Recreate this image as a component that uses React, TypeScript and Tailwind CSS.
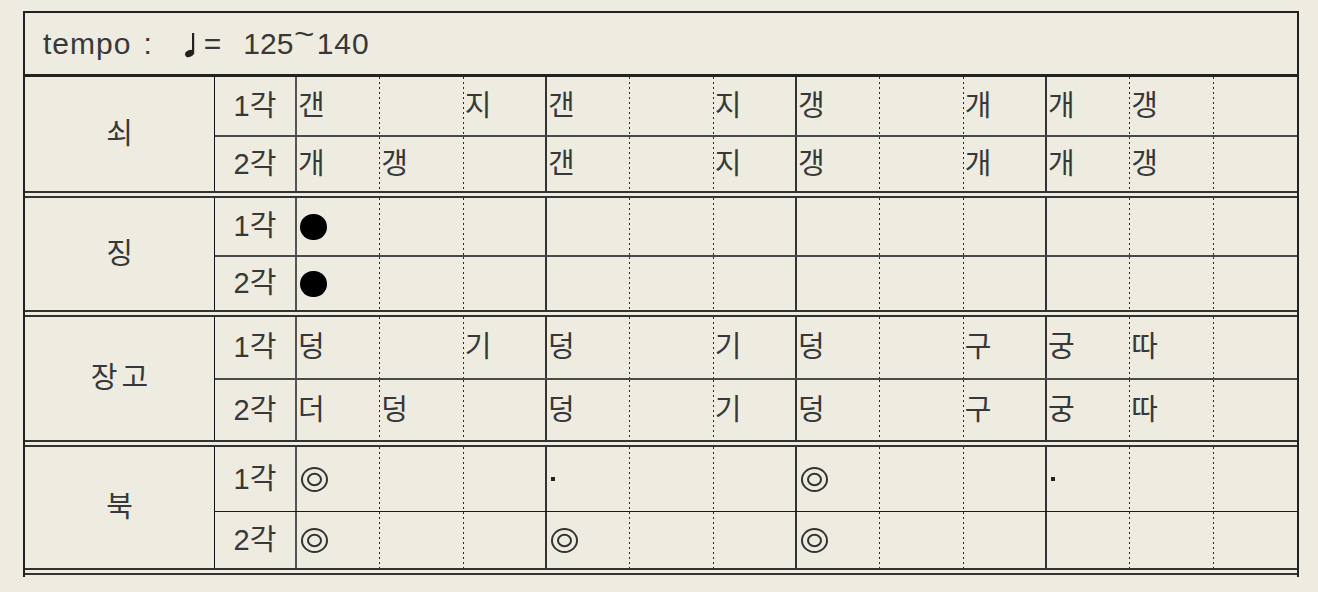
import React from "react";

type Group = {
  name: string;
  nameClass?: string;
  rowH: [string, string];
  sep: string;
  rows: [string[], string[]];
};

const groups: Group[] = [
  {
    name: "쇠",
    rowH: ["h-[60px]", "h-[54px]"],
    sep: "border-b-2 border-[#4a4a4a]",
    rows: [
      ["갠", "", "지", "갠", "", "지", "갱", "", "개", "개", "갱", ""],
      ["개", "갱", "", "갠", "", "지", "갱", "", "개", "개", "갱", ""],
    ],
  },
  {
    name: "징",
    rowH: ["h-[59px]", "h-[53px]"],
    sep: "border-b-2 border-[#4a4a4a]",
    rows: [
      ["●", "", "", "", "", "", "", "", "", "", "", ""],
      ["●", "", "", "", "", "", "", "", "", "", "", ""],
    ],
  },
  {
    name: "장고",
    nameClass: "tracking-[4px] pl-[4px]",
    rowH: ["h-[63px]", "h-[60px]"],
    sep: "border-b-2 border-[#4a4a4a]",
    rows: [
      ["덩", "", "기", "덩", "", "기", "덩", "", "구", "궁", "따", ""],
      ["더", "덩", "", "덩", "", "기", "덩", "", "구", "궁", "따", ""],
    ],
  },
  {
    name: "북",
    rowH: ["h-[65px]", "h-[56px]"],
    sep: "border-b border-[#1a1a1a]",
    rows: [
      ["◎", "", "", "·", "", "", "◎", "", "", "·", "", ""],
      ["◎", "", "", "◎", "", "", "◎", "", "", "", "", ""],
    ],
  },
];

function Mark({ v }: { v: string }) {
  if (v === "●") return <div className="ml-[3px] w-[27px] h-[26px] rounded-full bg-black" />;
  if (v === "·") return <div className="ml-[4px] w-[4px] h-[4px] bg-[#222]" />;
  if (v === "◎")
    return (
      <svg width="31" height="27" viewBox="0 0 31 27" className="ml-[3px]">
        <ellipse cx="14.5" cy="13.5" rx="12.5" ry="11.5" fill="none" stroke="#333" strokeWidth="2" />
        <ellipse cx="14.5" cy="13.5" rx="6.5" ry="5.8" fill="none" stroke="#333" strokeWidth="2" />
      </svg>
    );
  return <span className="pl-[1px]">{v}</span>;
}

// dotted rule drawn as a thin repeating gradient on the right edge
const dotted =
  "bg-[repeating-linear-gradient(to_bottom,#2a2a2a_0_2px,transparent_2px_5px)] bg-[length:1px_100%] bg-right bg-no-repeat";

function beatBorder(i: number) {
  if (i === 11) return "";
  if (i % 3 === 2) return "border-r-2 border-solid border-[#333]";
  return dotted;
}

function Row({ label, cells, h, sep }: { label: string; cells: string[]; h: string; sep: string }) {
  return (
    <div className={`grid grid-cols-[82px_repeat(12,1fr)] ${h} ${sep}`}>
      <div className="flex items-center justify-center border-r-2 border-[#555]">{label}</div>
      {cells.map((v, i) => (
        <div key={i} className={`flex items-center ${beatBorder(i)}`}>
          <Mark v={v} />
        </div>
      ))}
    </div>
  );
}

export default function App() {
  return (
    <div className="w-full h-[592px] bg-[#eeece0] pt-[11px] pl-[23px] overflow-hidden font-['Liberation_Sans','Noto_Sans_CJK_KR',sans-serif] text-[29px] text-[#383838] leading-none">
      <div className="w-[1276px] border-l-2 border-r-2 border-t-2 border-[#222] pb-[2px]">
        {/* tempo */}
        <div className="h-[64px] border-b-[3px] border-[#222] flex items-center pl-[18px] text-[30px]">
          <span className="tracking-[1px]">tempo</span>
          <span className="ml-[12px]">:</span>
          <svg width="14" height="26" viewBox="0 0 14 26" className="ml-[30px] mt-[2px]">
            <rect x="10" y="1" width="2.2" height="21" fill="#222" />
            <ellipse cx="7.5" cy="21.5" rx="4.6" ry="3.4" transform="rotate(-25 7.5 21.5)" fill="#222" />
          </svg>
          <span className="ml-[8px]">=</span>
          <span className="ml-[22px]">125</span>
          <span className="ml-[3px] -translate-y-[9px] inline-block text-[28px] scale-x-125">~</span>
          <span className="ml-[4px] tracking-[1px]">140</span>
        </div>

        {groups.map((g) => (
          <div key={g.name} className="flex border-b-[7px] border-double border-[#333]">
            <div className="w-[190px] shrink-0 border-r border-[#111] flex items-center justify-center">
              <span className={g.nameClass}>{g.name}</span>
            </div>
            <div className="flex-1 flex flex-col">
              <Row label="1각" cells={g.rows[0]} h={g.rowH[0]} sep={g.sep} />
              <Row label="2각" cells={g.rows[1]} h={g.rowH[1]} sep="" />
            </div>
          </div>
        ))}
      </div>
    </div>
  );
}
